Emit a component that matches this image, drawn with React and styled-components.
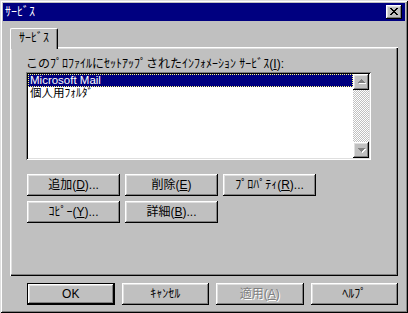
import React from "react";
import styled, { createGlobalStyle } from "styled-components";

const FONT = `"Liberation Sans", "Noto Sans CJK JP", sans-serif`;

const Global = createGlobalStyle`
  html, body { margin: 0; padding: 0; background: #c0c0c0; }
  body { font-family: ${FONT}; font-size: 12px; }
  * { box-sizing: border-box; }
`;

const raised = `
  box-shadow: inset -1px -1px 0 #000, inset 1px 1px 0 #fff,
    inset -2px -2px 0 #808080, inset 2px 2px 0 #dfdfdf;
`;

const Window = styled.div`
  width: 408px;
  height: 313px;
  padding: 3px;
  background: #c0c0c0;
  box-shadow: inset 1px 1px 0 #dfdfdf, inset -1px -1px 0 #000,
    inset 2px 2px 0 #fff, inset -2px -2px 0 #808080;
  display: flex;
  flex-direction: column;
`;

const TitleBar = styled.div`
  height: 18px;
  background: #000080;
  color: #fff;
  display: flex;
  align-items: center;
  justify-content: space-between;
  padding: 0 3px 0 2px;
`;

const Title = styled.span`
  font-size: 12px;
  line-height: 14px;
`;

const CloseButton = styled.div`
  width: 16px;
  height: 14px;
  background: #c0c0c0;
  ${raised}
  display: flex;
  align-items: center;
  justify-content: center;
  padding-bottom: 1px;
  padding-right: 1px;
`;

const Body = styled.div`
  flex: 1;
  display: flex;
  flex-direction: column;
  padding: 7px 7px 5px 7px;
`;

const TabStrip = styled.div`
  display: flex;
  height: 19px;
`;

const Tab = styled.div`
  position: relative;
  z-index: 1;
  height: 21px;
  padding: 2px 8px 0 8px;
  background: #c0c0c0;
  border-top: 1px solid #fff;
  border-left: 1px solid #fff;
  border-right: 1px solid #000;
  border-radius: 2px 2px 0 0;
  box-shadow: inset -1px 0 0 #808080;
  line-height: 14px;
  white-space: nowrap;
`;

const Panel = styled.div`
  flex: 1;
  display: flex;
  flex-direction: column;
  padding: 10px 27px 0 16px;
  box-shadow: inset 1px 1px 0 #fff, inset -1px -1px 0 #000,
    inset -2px -2px 0 #808080, inset 2px 2px 0 #dfdfdf;
`;

const Label = styled.div`
  line-height: 14px;
  height: 14px;
  margin-bottom: 1px;
  white-space: nowrap;
`;

const U = styled.span`
  text-decoration: underline;
`;

const ListBox = styled.div`
  height: 88px;
  display: flex;
  padding: 2px;
  background: #fff;
  box-shadow: inset 1px 1px 0 #808080, inset -1px -1px 0 #fff,
    inset 2px 2px 0 #000, inset -2px -2px 0 #dfdfdf;
`;

const Items = styled.div`
  flex: 1;
  display: flex;
  flex-direction: column;
`;

const Item = styled.div`
  height: 13px;
  line-height: 13px;
  font-size: 11.5px;
  padding-left: 2px;
  white-space: nowrap;
  color: ${(p) => (p.$selected ? "#fff" : "#000")};
  background: ${(p) => (p.$selected ? "#000080" : "transparent")};
  outline: ${(p) => (p.$selected ? "1px dotted #ffff7f" : "none")};
  outline-offset: -1px;
`;

const ScrollBar = styled.div`
  width: 16px;
  display: flex;
  flex-direction: column;
`;

const ScrollButton = styled.div`
  width: 16px;
  height: 16px;
  background: #c0c0c0;
  ${raised}
  display: flex;
  align-items: center;
  justify-content: center;
`;

const Track = styled.div`
  flex: 1;
  background-color: #c0c0c0;
  background-image: conic-gradient(#fff 25%, #c0c0c0 0 50%, #fff 0 75%, #c0c0c0 0);
  background-size: 2px 2px;
`;

const ButtonGrid = styled.div`
  margin-top: 14px;
  margin-left: 1px;
  display: grid;
  grid-template-columns: repeat(3, 93px);
  gap: 5px;
`;

const Button = styled.div`
  height: 22px;
  background: #c0c0c0;
  ${raised}
  border: ${(p) => (p.$default ? "1px solid #000" : "none")};
  display: flex;
  align-items: center;
  justify-content: center;
  line-height: 14px;
  white-space: nowrap;
  color: ${(p) => (p.$disabled ? "#808080" : "#000")};
  text-shadow: ${(p) => (p.$disabled ? "1px 1px 0 #fff" : "none")};
`;

const Footer = styled.div`
  margin-top: 7px;
  padding-left: 17px;
  display: grid;
  grid-template-columns: repeat(4, 1fr);
  gap: 7px;
`;

const CloseGlyph = () => {
  const rows = [
    [0, 1, 6, 7],
    [1, 2, 5, 6],
    [2, 3, 4, 5],
    [3, 4],
    [2, 3, 4, 5],
    [1, 2, 5, 6],
    [0, 1, 6, 7],
  ];
  return (
    <svg width="8" height="7" viewBox="0 0 8 7" shapeRendering="crispEdges">
      {rows.map((cols, y) =>
        cols.map((x) => <rect key={`${x}-${y}`} x={x} y={y} width="1" height="1" fill="#000" />)
      )}
    </svg>
  );
};

const Arrow = ({ down }) => (
  <svg width="9" height="6" viewBox="0 0 9 6" shapeRendering="crispEdges">
    {down ? (
      <>
        <path d="M2 2h7v1h-1v1h-1v1h-1v1h-1v-1h-1v-1h-1v-1h-1z" fill="#fff" />
        <path d="M1 1h7v1h-1v1h-1v1h-1v1h-1v-1h-1v-1h-1v-1h-1z" fill="#808080" />
      </>
    ) : (
      <>
        <path d="M5 1h1v1h1v1h1v1h1v1h-7v-1h1v-1h1v-1h1z" fill="#fff" />
        <path d="M4 0h1v1h1v1h1v1h1v1h-7v-1h1v-1h1v-1h1z" fill="#808080" />
      </>
    )}
  </svg>
);

export default function App() {
  return (
    <>
      <Global />
      <Window>
        <TitleBar>
          <Title>ｻｰﾋﾞｽ</Title>
          <CloseButton>
            <CloseGlyph />
          </CloseButton>
        </TitleBar>
        <Body>
          <TabStrip>
            <Tab>ｻｰﾋﾞｽ</Tab>
          </TabStrip>
          <Panel>
            <Label>
              このﾌﾟﾛﾌｧｲﾙにｾｯﾄｱｯﾌﾟされたｲﾝﾌｫﾒｰｼｮﾝ ｻｰﾋﾞｽ(<U>I</U>):
            </Label>
            <ListBox>
              <Items>
                <Item $selected>Microsoft Mail</Item>
                <Item>個人用ﾌｫﾙﾀﾞ</Item>
              </Items>
              <ScrollBar>
                <ScrollButton>
                  <Arrow />
                </ScrollButton>
                <Track />
                <ScrollButton>
                  <Arrow down />
                </ScrollButton>
              </ScrollBar>
            </ListBox>
            <ButtonGrid>
              <Button>追加(<U>D</U>)...</Button>
              <Button>削除(<U>E</U>)</Button>
              <Button>ﾌﾟﾛﾊﾟﾃｨ(<U>R</U>)...</Button>
              <Button>ｺﾋﾟｰ(<U>Y</U>)...</Button>
              <Button>詳細(<U>B</U>)...</Button>
            </ButtonGrid>
          </Panel>
          <Footer>
            <Button $default>OK</Button>
            <Button>ｷｬﾝｾﾙ</Button>
            <Button $disabled>適用(<U>A</U>)</Button>
            <Button>ﾍﾙﾌﾟ</Button>
          </Footer>
        </Body>
      </Window>
    </>
  );
}
